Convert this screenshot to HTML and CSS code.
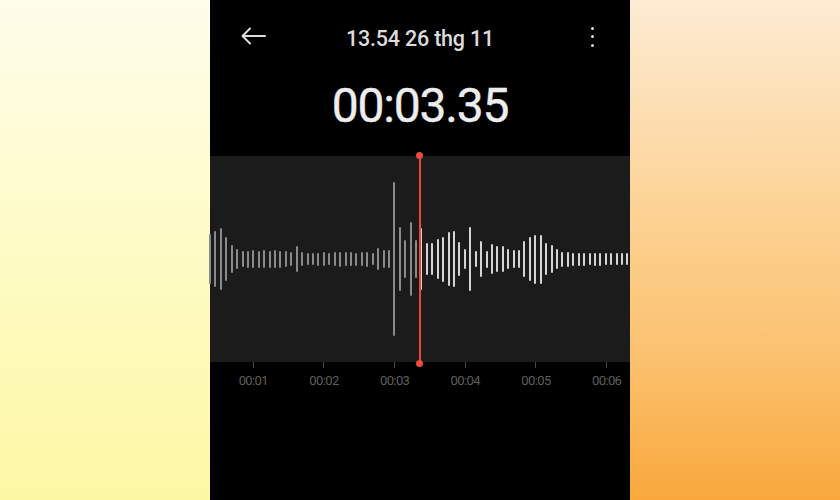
FILE: index.html
```html
<!DOCTYPE html>
<html lang="vi">
<head>
<meta charset="utf-8">
<title>Ghi âm</title>
<link rel="stylesheet" href="styles.css">
</head>
<body>
<div class="page">
  <div class="side side-left"></div>
  <main class="phone">
    <header class="topbar">
      <svg class="back" width="26" height="18" viewBox="0 0 26 18" aria-hidden="true">
        <path d="M25 9H2.5M10 1.5L2.5 9L10 16.5" fill="none" stroke="#dcdcdc" stroke-width="2" stroke-linecap="round" stroke-linejoin="round"/>
      </svg>
      <span class="title">13.54 26 thg 11</span>
      <span class="kebab"><i></i><i></i><i></i></span>
    </header>
    <div class="timer">00:03.35</div>
    <section class="wave-panel">
      <div class="wave">
        <span class="bar" style="height:50px"></span>
        <span class="bar" style="height:56px"></span>
        <span class="bar" style="height:62px"></span>
        <span class="bar" style="height:44px"></span>
        <span class="bar" style="height:28px"></span>
        <span class="bar" style="height:20px"></span>
        <span class="bar" style="height:16px"></span>
        <span class="bar" style="height:17px"></span>
        <span class="bar" style="height:18px"></span>
        <span class="bar" style="height:17px"></span>
        <span class="bar" style="height:18px"></span>
        <span class="bar" style="height:17px"></span>
        <span class="bar" style="height:18px"></span>
        <span class="bar" style="height:17px"></span>
        <span class="bar" style="height:16px"></span>
        <span class="bar" style="height:14px"></span>
        <span class="bar" style="height:26px"></span>
        <span class="bar" style="height:14px"></span>
        <span class="bar" style="height:12px"></span>
        <span class="bar" style="height:12px"></span>
        <span class="bar" style="height:13px"></span>
        <span class="bar" style="height:14px"></span>
        <span class="bar" style="height:12px"></span>
        <span class="bar" style="height:14px"></span>
        <span class="bar" style="height:15px"></span>
        <span class="bar" style="height:14px"></span>
        <span class="bar" style="height:14px"></span>
        <span class="bar" style="height:13px"></span>
        <span class="bar" style="height:14px"></span>
        <span class="bar" style="height:15px"></span>
        <span class="bar" style="height:12px"></span>
        <span class="bar" style="height:22px"></span>
        <span class="bar" style="height:18px"></span>
        <span class="bar" style="height:18px"></span>
        <span class="bar" style="height:154px"></span>
        <span class="bar" style="height:64px"></span>
        <span class="bar" style="height:38px"></span>
        <span class="bar" style="height:74px"></span>
        <span class="bar" style="height:38px"></span>
        <span class="bar ahead" style="height:62px"></span>
        <span class="bar ahead" style="height:32px"></span>
        <span class="bar ahead" style="height:32px"></span>
        <span class="bar ahead" style="height:40px"></span>
        <span class="bar ahead" style="height:45px"></span>
        <span class="bar ahead" style="height:54px"></span>
        <span class="bar ahead" style="height:56px"></span>
        <span class="bar ahead" style="height:34px"></span>
        <span class="bar ahead" style="height:20px"></span>
        <span class="bar ahead" style="height:64px"></span>
        <span class="bar ahead" style="height:16px"></span>
        <span class="bar ahead" style="height:36px"></span>
        <span class="bar ahead" style="height:17px"></span>
        <span class="bar ahead" style="height:30px"></span>
        <span class="bar ahead" style="height:26px"></span>
        <span class="bar ahead" style="height:26px"></span>
        <span class="bar ahead" style="height:20px"></span>
        <span class="bar ahead" style="height:18px"></span>
        <span class="bar ahead" style="height:18px"></span>
        <span class="bar ahead" style="height:36px"></span>
        <span class="bar ahead" style="height:44px"></span>
        <span class="bar ahead" style="height:49px"></span>
        <span class="bar ahead" style="height:49px"></span>
        <span class="bar ahead" style="height:32px"></span>
        <span class="bar ahead" style="height:28px"></span>
        <span class="bar ahead" style="height:20px"></span>
        <span class="bar ahead" style="height:15px"></span>
        <span class="bar ahead" style="height:15px"></span>
        <span class="bar ahead" style="height:13px"></span>
        <span class="bar ahead" style="height:13px"></span>
        <span class="bar ahead" style="height:13px"></span>
        <span class="bar ahead" style="height:12px"></span>
        <span class="bar ahead" style="height:13px"></span>
        <span class="bar ahead" style="height:13px"></span>
        <span class="bar ahead" style="height:12px"></span>
        <span class="bar ahead" style="height:12px"></span>
        <span class="bar ahead" style="height:12px"></span>
        <span class="bar ahead" style="height:12px"></span>
        <span class="bar ahead" style="height:12px"></span>
      </div>
      <div class="playhead"></div>
    </section>
    <div class="timeline">
      <div class="mark"><span class="tick"></span><span class="label">00:01</span></div>
      <div class="mark"><span class="tick"></span><span class="label">00:02</span></div>
      <div class="mark"><span class="tick"></span><span class="label">00:03</span></div>
      <div class="mark"><span class="tick"></span><span class="label">00:04</span></div>
      <div class="mark"><span class="tick"></span><span class="label">00:05</span></div>
      <div class="mark"><span class="tick"></span><span class="label">00:06</span></div>
    </div>
  </main>
  <div class="side side-right"></div>
</div>
</body>
</html>
```

FILE: styles.css
```css
* { box-sizing: border-box; }

html, body {
  margin: 0;
  padding: 0;
  width: 840px;
  height: 500px;
  overflow: hidden;
  background: #000;
  font-family: Roboto, "Liberation Sans", Arial, sans-serif;
}

.page {
  display: flex;
  width: 840px;
  height: 500px;
}

.side {
  width: 210px;
  height: 500px;
  flex: none;
}

.side-left {
  background: linear-gradient(to bottom, #fffdeb 0%, #fefbc9 45%, #fdf8a4 100%);
}

.side-right {
  background: linear-gradient(to bottom, #fdebd4 0%, #fcd498 40%, #fbc271 70%, #f9a83c 100%);
}

.phone {
  width: 420px;
  height: 500px;
  flex: none;
  background: #000;
  display: flex;
  flex-direction: column;
}

.topbar {
  height: 74px;
  display: flex;
  align-items: center;
  justify-content: space-between;
  padding: 0 36px 0 30px;
  position: relative;
}

.back {
  display: block;
  margin-top: -2px;
}

.title {
  position: absolute;
  left: 0;
  right: 0;
  top: 28px;
  text-align: center;
  font-size: 21.5px;
  font-weight: 500;
  line-height: 1;
  letter-spacing: -0.2px;
  color: #dcdcdc;
  pointer-events: none;
}

.kebab {
  display: flex;
  flex-direction: column;
  gap: 5.5px;
  align-items: center;
  margin-top: -1px;
}

.kebab i {
  display: block;
  width: 3px;
  height: 3px;
  border-radius: 50%;
  background: #dcdcdc;
}

.timer {
  margin-top: 8px;
  font-size: 48px;
  font-weight: 400;
  line-height: 1;
  letter-spacing: -1.2px;
  text-align: center;
  color: #ededed;
  -webkit-text-stroke: 0.4px #ededed;
}

.wave-panel {
  margin-top: 26px;
  height: 206px;
  background: #1b1b1b;
  position: relative;
}

.wave {
  height: 100%;
  display: flex;
  align-items: center;
  gap: 3.43px;
  margin-left: -1px;
  overflow: hidden;
}

.bar {
  flex: none;
  width: 2px;
  border-radius: 1px;
  background: #8a8a8a;
}

.bar.ahead {
  background: #d4d4d4;
}

.playhead {
  position: absolute;
  top: -1px;
  bottom: -1px;
  left: 208.5px;
  width: 2px;
  background: #e8473f;
}

.playhead::before,
.playhead::after {
  content: "";
  position: absolute;
  left: -2.5px;
  width: 7px;
  height: 7px;
  border-radius: 50%;
  background: #ec4b42;
}

.playhead::before { top: -3.5px; }
.playhead::after { bottom: -3.5px; }

.timeline {
  display: grid;
  grid-template-columns: repeat(6, 70.67px);
  padding-left: 8px;
}

.mark {
  display: flex;
  flex-direction: column;
  align-items: center;
}

.tick {
  width: 1px;
  height: 6px;
  background: #474747;
}

.label {
  margin-top: 5.5px;
  font-size: 13px;
  line-height: 1;
  letter-spacing: -0.6px;
  color: #5e5e5e;
}
```
